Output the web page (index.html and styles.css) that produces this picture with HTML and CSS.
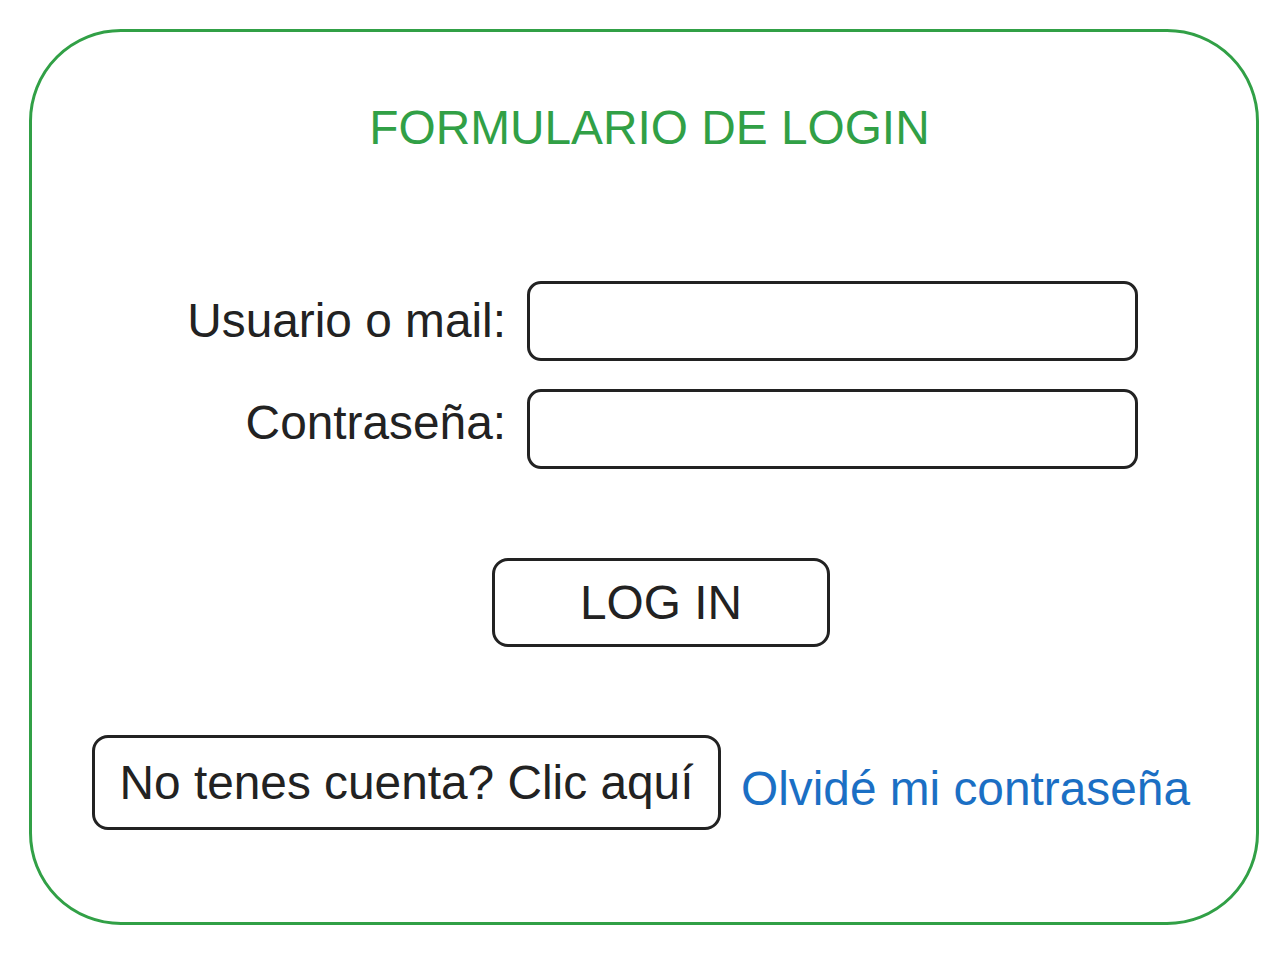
FILE: index.html
```html
<!DOCTYPE html>
<html lang="es">
<head>
<meta charset="utf-8">
<title>Formulario de login</title>
<link rel="stylesheet" href="styles.css">
</head>
<body>
  <div class="card">
    <h1 class="title">FORMULARIO DE LOGIN</h1>
    <form class="form">
      <label class="label label-user" for="user">Usuario o mail:</label>
      <input class="field" id="user" type="text">
      <label class="label label-pass" for="pass">Contraseña:</label>
      <input class="field" id="pass" type="password">
    </form>
    <button class="login" type="button">LOG IN</button>
    <div class="bottom">
      <button class="signup" type="button">No tenes cuenta? Clic aquí</button>
      <a class="forgot" href="#">Olvidé mi contraseña</a>
    </div>
  </div>
</body>
</html>
```
FILE: styles.css
```css
html, body {
  margin: 0;
  padding: 0;
  background: #ffffff;
}

body {
  font-family: "Liberation Sans", Arial, sans-serif;
  color: #222222;
}

.card {
  box-sizing: border-box;
  margin: 29px 0 0 29px;
  width: 1230px;
  height: 896px;
  border: 3px solid #31a046;
  border-radius: 92px;
  padding-top: 72px;
  display: flex;
  flex-direction: column;
}

.title {
  margin: 0;
  height: 48px;
  font-size: 47.8px;
  line-height: 1;
  font-weight: normal;
  color: #31a046;
  text-align: center;
  padding-left: 11px;
}

.form {
  margin: 129px 0 0 0;
  display: grid;
  grid-template-columns: 474px 611px;
  grid-auto-rows: 80px;
  column-gap: 21px;
  row-gap: 28px;
  align-items: start;
}

.label {
  text-align: right;
  font-size: 47.8px;
  line-height: 1;
}

.label-user {
  margin-top: 16px;
}

.label-pass {
  margin-top: 10px;
}

.field {
  box-sizing: border-box;
  width: 611px;
  height: 80px;
  border: 3px solid #222222;
  border-radius: 14px;
  background: #ffffff;
  margin: 0;
  outline: none;
}

.login {
  box-sizing: border-box;
  align-self: flex-start;
  margin: 89px 0 0 460px;
  width: 338px;
  height: 89px;
  border: 3px solid #222222;
  border-radius: 16px;
  background: #ffffff;
  font-family: "Liberation Sans", Arial, sans-serif;
  font-size: 47.8px;
  line-height: 1;
  color: #222222;
  padding: 0;
}

.bottom {
  margin: 88px 0 0 60px;
  display: flex;
  align-items: flex-start;
  gap: 20px;
}

.signup {
  box-sizing: border-box;
  width: 629px;
  height: 95px;
  border: 3px solid #222222;
  border-radius: 16px;
  background: #ffffff;
  font-family: "Liberation Sans", Arial, sans-serif;
  font-size: 47.8px;
  line-height: 1;
  color: #222222;
  padding: 0;
}

.forgot {
  margin-top: 30px;
  font-size: 47.8px;
  line-height: 1;
  color: #1b6fc4;
  text-decoration: none;
  white-space: nowrap;
}
```
